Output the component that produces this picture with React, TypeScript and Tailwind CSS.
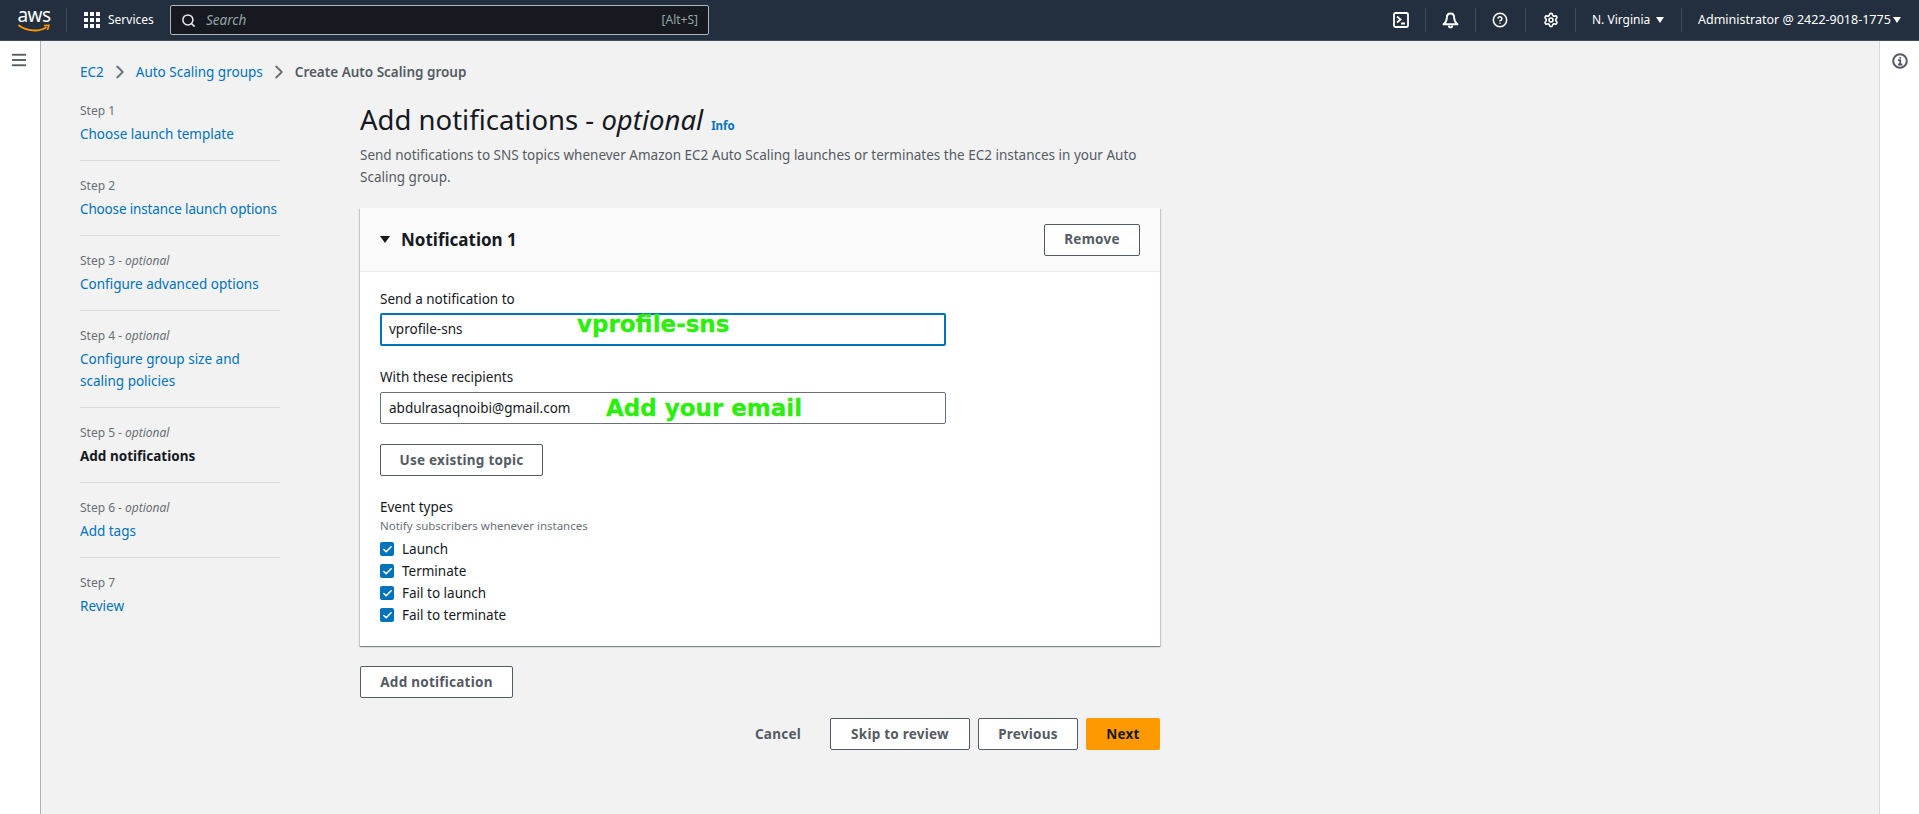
import { Menu, Search, HelpCircle, Settings, ChevronRight, Check } from 'lucide-react';

const font = "font-['Noto_Sans','Open_Sans',sans-serif]";

const steps = [
  { step: 'Step 1', label: 'Choose launch template' },
  { step: 'Step 2', label: 'Choose instance launch options', tight: true },
  { step: 'Step 3', optional: true, label: 'Configure advanced options' },
  { step: 'Step 4', optional: true, label: 'Configure group size and scaling policies' },
  { step: 'Step 5', optional: true, label: 'Add notifications', active: true },
  { step: 'Step 6', optional: true, label: 'Add tags' },
  { step: 'Step 7', label: 'Review' },
];

const events = ['Launch', 'Terminate', 'Fail to launch', 'Fail to terminate'];

function Caret() {
  return <span className="ml-[7px] inline-block border-x-[4px] border-t-[6px] border-x-transparent border-t-white" />;
}

function Sep() {
  return <div className="h-[24px] w-px bg-[#414d5c]" />;
}

function OutlineButton({ children, className }: { children: string; className: string }) {
  return (
    <button className={`h-[32px] rounded-[2px] border border-[#545b64] bg-white text-[13.5px] font-bold tracking-[0.25px] text-[#545b64] ${className}`}>
      {children}
    </button>
  );
}

function Header() {
  return (
    <header className="flex h-[41px] shrink-0 items-center border-b border-[#414d5c] bg-[#232f3e] text-white">
      <div className="flex w-[66px] shrink-0 flex-col items-center pl-[2px]">
        <span className="text-[19px] leading-[15px] tracking-[-0.5px]">aws</span>
        <svg width="32" height="9" viewBox="0 0 32 9" className="mt-[1px]">
          <path d="M1 1.5C9 7.5 21 8 28 3.5" fill="none" stroke="#ff9900" strokeWidth="1.8" strokeLinecap="round" />
          <path d="M26 1.5L31 1.2L29.5 6" fill="none" stroke="#ff9900" strokeWidth="1.5" />
        </svg>
      </div>
      <div className="h-[24px] w-px bg-[#414d5c]" />
      <div className="ml-[17px] grid w-[16px] grid-cols-3 gap-[2px]">
        {Array.from({ length: 9 }).map((_, i) => (
          <span key={i} className="h-[4px] w-[4px] bg-white" />
        ))}
      </div>
      <span className="ml-[8px] w-[45px] text-[12px] whitespace-nowrap">Services</span>
      <div className="ml-[17px] flex h-[30px] w-[539px] items-center rounded-[2px] border border-[#aab7b8] bg-[#16191f] px-[10px]">
        <Search size={15} strokeWidth={2.4} className="text-[#eaeded]" />
        <span className="ml-[10px] text-[13.5px] text-[#95a5a6] italic">Search</span>
        <span className="ml-auto text-[12px] text-[#95a5a6]">[Alt+S]</span>
      </div>
      <div className="ml-auto flex items-center pr-[18px]">
        <svg width="16" height="16" viewBox="0 0 16 16" fill="none" stroke="white" strokeWidth="1.8">
          <rect x="1" y="1" width="14" height="14" rx="1.5" />
          <path d="M4 4.5L7.5 7.5L4 10.5M8 11.5H12" />
        </svg>
        <div className="mx-[16px]"><Sep /></div>
        <svg width="17" height="17" viewBox="0 0 17 17" fill="none" stroke="white" strokeWidth="1.9">
          <path d="M8.5 1.5C6 1.5 4.8 3.5 4.8 6C4.8 8.5 3.8 10.5 1.5 12.3H15.5C13.2 10.5 12.2 8.5 12.2 6C12.2 3.5 11 1.5 8.5 1.5Z" strokeLinejoin="round" />
          <path d="M6.8 13.5C6.8 16 10.2 16 10.2 13.5" />
        </svg>
        <div className="mx-[16px]"><Sep /></div>
        <HelpCircle size={16} strokeWidth={2.3} />
        <div className="mx-[17px]"><Sep /></div>
        <Settings size={16} strokeWidth={2.4} />
        <div className="mx-[16px]"><Sep /></div>
        <span className="w-[57px] text-[12px] whitespace-nowrap">N. Virginia</span>
        <Caret />
        <div className="ml-[17px] mr-[16px]"><Sep /></div>
        <span className="w-[188px] text-[12.5px] whitespace-nowrap">Administrator @ 2422-9018-1775</span>
        <Caret />
      </div>
    </header>
  );
}

function Steps() {
  return (
    <nav className="w-[200px] shrink-0">
      {steps.map((s, i) => (
        <div key={s.step} className={`pb-[15px] ${i === 0 ? 'pt-0' : 'pt-[17px]'} ${i < steps.length - 1 ? 'border-b border-[#d5dbdb]' : ''}`}>
          <div className="text-[12px] leading-[16px] text-[#687078]">
            {s.step}
            {s.optional && <span className="italic"> - optional</span>}
          </div>
          <div className={`mt-[4px] text-[13.5px] leading-[22px] ${s.active ? 'font-bold text-[#16191f]' : 'text-[#0073bb]'} ${s.tight ? 'tracking-[-0.15px] whitespace-nowrap' : ''}`}>{s.label}</div>
        </div>
      ))}
    </nav>
  );
}

function NotificationCard() {
  return (
    <section className="mt-[20px] bg-white shadow-[0_1px_1px_0_rgba(0,28,36,0.3),1px_1px_1px_0_rgba(0,28,36,0.15),-1px_1px_1px_0_rgba(0,28,36,0.15)]">
      <div className="flex h-[64px] items-center border-b border-[#eaeded] bg-[#fafafa] px-[20px]">
        <span className="border-x-[5px] border-t-[7px] border-x-transparent border-t-[#16191f]" />
        <h2 className="ml-[11px] text-[17px] font-bold text-[#16191f]">Notification 1</h2>
        <OutlineButton className="ml-auto w-[96px]">Remove</OutlineButton>
      </div>
      <div className="px-[20px] pt-[16px] pb-[20px]">
        <label className="block text-[13.5px] leading-[22px] text-[#16191f]">Send a notification to</label>
        <div className="relative mt-[3px] flex h-[33px] w-[566px] items-center rounded-[2px] border-2 border-[#0073bb] px-[7px] text-[13.5px] text-[#16191f]">
          vprofile-sns
          <span className="absolute top-[-3px] left-[195px] font-['DejaVu_Sans',sans-serif] text-[23px] leading-[24px] font-bold whitespace-nowrap text-[#2bee0c] [-webkit-text-stroke:0.3px_#2bee0c]">vprofile-sns</span>
        </div>
        <label className="mt-[20px] block text-[13.5px] leading-[22px] text-[#16191f]">With these recipients</label>
        <div className="relative mt-[4px] flex h-[32px] w-[566px] items-center rounded-[2px] border border-[#687078] px-[8px] text-[13.5px] text-[#16191f]">
          abdulrasaqnoibi@gmail.com
          <span className="absolute top-[3px] left-[225px] font-['DejaVu_Sans',sans-serif] text-[23px] leading-[24px] font-bold whitespace-nowrap text-[#2bee0c] [-webkit-text-stroke:0.3px_#2bee0c]">Add your email</span>
        </div>
        <OutlineButton className="mt-[20px] block w-[163px]">Use existing topic</OutlineButton>
        <div className="mt-[20px] text-[13.5px] leading-[22px] text-[#16191f]">Event types</div>
        <div className="text-[11.5px] leading-[16px] text-[#687078]">Notify subscribers whenever instances</div>
        <div className="mt-[4px]">
          {events.map((e) => (
            <div key={e} className="flex h-[22px] items-center text-[13.5px] text-[#16191f]">
              <span className="flex h-[14px] w-[14px] items-center justify-center rounded-[2px] bg-[#0073bb]">
                <Check size={11} strokeWidth={3.5} className="text-white" />
              </span>
              <span className="ml-[8px]">{e}</span>
            </div>
          ))}
        </div>
      </div>
    </section>
  );
}

export default function App() {
  return (
    <div className={`flex h-[814px] flex-col overflow-hidden bg-[#f2f2f2] ${font}`}>
      <Header />
      <div className="flex min-h-0 flex-1">
        <aside className="w-[41px] shrink-0 border-r border-[#aab7b8] bg-white pt-[10px] pl-[10px]">
          <Menu size={18} strokeWidth={2.5} strokeLinecap="square" className="text-[#545b64]" />
        </aside>
        <main className="flex-1 pt-[21px] pl-[39px]">
          <div className="flex h-[20px] items-center text-[13.5px] text-[#0073bb]">
            <span>EC2</span>
            <ChevronRight size={22} className="mx-[5px] text-[#687078]" />
            <span>Auto Scaling groups</span>
            <ChevronRight size={22} className="mx-[5px] text-[#687078]" />
            <span className="font-semibold text-[#545b64]">Create Auto Scaling group</span>
          </div>
          <div className="mt-[21px] flex">
            <Steps />
            <div className="ml-[80px] w-[800px]">
              <h1 className="-mt-[1px] text-[27.5px] leading-[36px] text-[#16191f]">
                Add notifications - <em>optional</em>
                <span className="ml-[8px] text-[11.5px] font-bold text-[#0073bb]">Info</span>
              </h1>
              <p className="text-[13.5px] leading-[22px] text-[#545b64]">
                Send notifications to SNS topics whenever Amazon EC2 Auto Scaling launches or terminates the EC2 instances in your Auto Scaling group.
              </p>
              <NotificationCard />
              <OutlineButton className="mt-[20px] block w-[153px]">Add notification</OutlineButton>
              <div className="mt-[20px] flex items-center justify-end">
                <span className="mr-[29px] text-[13.5px] font-bold tracking-[0.25px] text-[#545b64]">Cancel</span>
                <OutlineButton className="w-[140px]">Skip to review</OutlineButton>
                <OutlineButton className="ml-[8px] w-[100px]">Previous</OutlineButton>
                <button className="ml-[8px] h-[32px] w-[74px] rounded-[2px] bg-[#ff9900] text-[13.5px] font-bold tracking-[0.25px] text-[#16191f]">Next</button>
              </div>
            </div>
          </div>
        </main>
        <aside className="flex w-[40px] shrink-0 justify-center border-l border-[#d5dbdb] bg-white pt-[12px]">
          <svg width="16" height="16" viewBox="0 0 16 16" fill="none" stroke="#545b64">
            <circle cx="8" cy="8" r="6.8" strokeWidth="2" />
            <path d="M6 7.2H8.2V11.2M6 11.5H10.4M8.2 4V5.6" strokeWidth="1.8" />
          </svg>
        </aside>
      </div>
    </div>
  );
}
